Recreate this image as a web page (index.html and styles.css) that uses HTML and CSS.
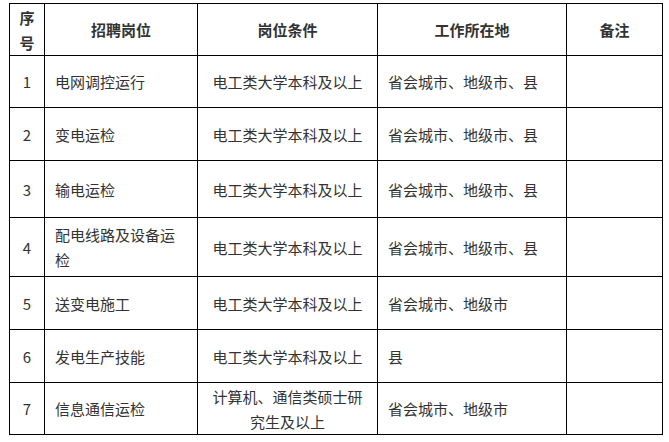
FILE: index.html
```html
<!DOCTYPE html>
<html lang="zh-CN">
<head>
<meta charset="utf-8">
<title>招聘岗位</title>
<link rel="stylesheet" href="styles.css">
</head>
<body>
<div class="page">
<table class="jobs">
<colgroup>
<col class="c-no"><col class="c-post"><col class="c-cond"><col class="c-place"><col class="c-note">
</colgroup>
<thead>
<tr class="h52"><th>序号</th><th>招聘岗位</th><th>岗位条件</th><th>工作所在地</th><th>备注</th></tr>
</thead>
<tbody>
<tr class="h52"><td class="num">1</td><td class="left">电网调控运行</td><td class="mid">电工类大学本科及以上</td><td class="left">省会城市、地级市、县</td><td></td></tr>
<tr class="h53"><td class="num">2</td><td class="left">变电运检</td><td class="mid">电工类大学本科及以上</td><td class="left">省会城市、地级市、县</td><td></td></tr>
<tr class="h57"><td class="num">3</td><td class="left">输电运检</td><td class="mid">电工类大学本科及以上</td><td class="left">省会城市、地级市、县</td><td></td></tr>
<tr class="h59"><td class="num">4</td><td class="left">配电线路及设备运检</td><td class="mid">电工类大学本科及以上</td><td class="left">省会城市、地级市、县</td><td></td></tr>
<tr class="h53"><td class="num">5</td><td class="left">送变电施工</td><td class="mid">电工类大学本科及以上</td><td class="left">省会城市、地级市</td><td></td></tr>
<tr class="h53"><td class="num">6</td><td class="left">发电生产技能</td><td class="mid">电工类大学本科及以上</td><td class="left">县</td><td></td></tr>
<tr class="h52"><td class="num">7</td><td class="left">信息通信运检</td><td class="mid">计算机、通信类硕士研究生及以上</td><td class="left">省会城市、地级市</td><td></td></tr>
</tbody>
</table>
</div>
</body>
</html>
```
FILE: styles.css
```css
html, body {
  margin: 0;
  padding: 0;
  background: #fff;
}
.page {
  padding: 3px 0 0 9px;
}
.jobs {
  border-collapse: collapse;
  table-layout: fixed;
  width: 653px;
  font-family: "Noto Sans CJK SC", "Microsoft YaHei", sans-serif;
  font-size: 15px;
  color: #333;
  line-height: 25px;
}
.c-no { width: 35px; }
.c-post { width: 153px; }
.c-cond { width: 180px; }
.c-place { width: 189px; }
.c-note { width: 96px; }
.jobs th, .jobs td {
  border: 1px solid #000;
  padding: 0 10px;
  vertical-align: middle;
}
.jobs th {
  font-weight: bold;
  text-align: center;
  padding: 0 8px;
  line-height: 25px;
}
.jobs td.num { text-align: center; padding: 0; }
.jobs td.left { text-align: left; }
.jobs td.mid { text-align: center; }
.h52 { height: 52px; }
.h53 { height: 53px; }
.h57 { height: 57px; }
.h59 { height: 59px; }
```
